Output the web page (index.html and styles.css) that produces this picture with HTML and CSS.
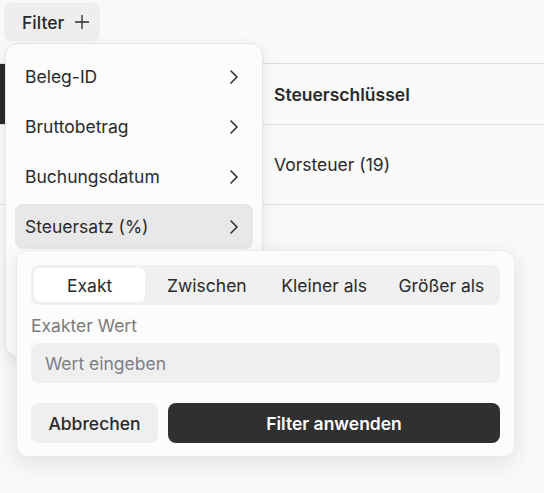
FILE: index.html
```html
<!DOCTYPE html>
<html lang="de">
<head>
<meta charset="utf-8">
<title>Buchungen</title>
<link rel="stylesheet" href="styles.css">
</head>
<body>
<div class="page">
  <div class="toolbar">
    <button class="filter-btn" type="button">
      <span>Filter</span>
      <svg class="plus" viewBox="0 0 16 16" width="16" height="16" aria-hidden="true">
        <path d="M8 1.5v13M1.5 8h13" fill="none" stroke="currentColor" stroke-width="1.3" stroke-linecap="round"/>
      </svg>
    </button>
  </div>

  <div class="table">
    <div class="cell head dark"></div>
    <div class="cell head">Steuerschlüssel</div>
    <div class="cell"></div>
    <div class="cell">Vorsteuer (19)</div>
  </div>

  <div class="menu">
    <div class="menu-item"><span>Beleg-ID</span><svg class="chev" viewBox="0 0 24 24"><path d="m9 18 6-6-6-6"/></svg></div>
    <div class="menu-item"><span>Bruttobetrag</span><svg class="chev" viewBox="0 0 24 24"><path d="m9 18 6-6-6-6"/></svg></div>
    <div class="menu-item"><span>Buchungsdatum</span><svg class="chev" viewBox="0 0 24 24"><path d="m9 18 6-6-6-6"/></svg></div>
    <div class="menu-item active"><span>Steuersatz (%)</span><svg class="chev" viewBox="0 0 24 24"><path d="m9 18 6-6-6-6"/></svg></div>
  </div>

  <div class="popover">
    <div class="segments">
      <div class="seg on">Exakt</div>
      <div class="seg">Zwischen</div>
      <div class="seg">Kleiner als</div>
      <div class="seg">Größer als</div>
    </div>
    <label class="field-label" for="wert">Exakter Wert</label>
    <input class="field" id="wert" type="text" placeholder="Wert eingeben">
    <div class="actions">
      <button class="btn secondary" type="button">Abbrechen</button>
      <button class="btn primary" type="button">Filter anwenden</button>
    </div>
  </div>
</div>
</body>
</html>
```

FILE: styles.css
```css
* { box-sizing: border-box; }

html, body {
  margin: 0;
  background: #f8f9fa;
  font-family: Inter, "Noto Sans", sans-serif;
  font-size: 17.5px;
  color: #2a2a2a;
}

.page {
  position: relative;
  width: 544px;
  height: 493px;
  overflow: hidden;
}

.toolbar {
  padding: 3px 4px 0;
  height: 63px;
}

.filter-btn {
  display: flex;
  align-items: center;
  gap: 10px;
  height: 38px;
  width: 96px;
  padding: 0 0 0 18px;
  border: 0;
  border-radius: 8px;
  background: #eeeeee;
  font: 500 17.5px Inter, sans-serif;
  color: #2a2a2a;
}

.plus { color: #2a2a2a; }

/* data table */
.table {
  display: grid;
  grid-template-columns: 262px 1fr;
  border-top: 1px solid #dcdcdc;
}

.cell {
  display: flex;
  align-items: center;
  padding: 0 12px;
  border-bottom: 1px solid #dcdcdc;
  height: 80px;
  background: #fafafa;
}

.cell.head {
  height: 61px;
  font-weight: 600;
}

.cell.dark {
  background: #2b2b2b;
}

/* column menu */
.menu {
  position: absolute;
  left: 5px;
  top: 43px;
  width: 258px;
  height: 314px;
  padding: 10px 9px;
  display: flex;
  flex-direction: column;
  gap: 5px;
  background: #fcfcfc;
  border: 1px solid #e4e4e4;
  border-radius: 12px;
  box-shadow: 0 4px 16px rgba(0, 0, 0, 0.08);
}

.menu-item {
  flex: 0 0 45px;
  display: flex;
  align-items: center;
  justify-content: space-between;
  padding: 0 7px 0 10px;
  border-radius: 8px;
}

.menu-item.active { background: #e8e8e8; }

.chev {
  width: 24px;
  height: 24px;
  fill: none;
  stroke: #2a2a2a;
  stroke-width: 1.5;
  stroke-linecap: round;
  stroke-linejoin: round;
}

/* value filter popover */
.popover {
  position: absolute;
  left: 16px;
  top: 250px;
  width: 499px;
  height: 207px;
  padding: 14px;
  background: #fcfcfc;
  border: 1px solid #ececec;
  border-radius: 12px;
  box-shadow: 0 6px 22px rgba(0, 0, 0, 0.10);
}

.segments {
  display: grid;
  grid-template-columns: repeat(4, 1fr);
  height: 40px;
  background: #f0f0f0;
  border-radius: 8px;
}

.seg {
  margin: 3px;
  display: flex;
  align-items: center;
  justify-content: center;
  border-radius: 6px;
  color: #2a2a2a;
}

.seg.on { background: #ffffff; }

.field-label {
  display: block;
  margin-top: 9px;
  line-height: 24px;
  color: #7c7a78;
}

.field {
  display: block;
  width: 100%;
  height: 40px;
  margin-top: 5px;
  padding: 0 14px;
  border: 0;
  border-radius: 8px;
  background: #efefef;
  font: 17.5px Inter, sans-serif;
  color: #2a2a2a;
}

.field::placeholder { color: #7d8088; }

.actions {
  display: flex;
  gap: 10px;
  margin-top: 20px;
}

.btn {
  height: 40px;
  border: 0;
  border-radius: 8px;
  font: 500 17.5px Inter, sans-serif;
}

.btn.secondary {
  width: 127px;
  background: #efefef;
  color: #2a2a2a;
}

.btn.primary {
  flex: 1;
  background: #303030;
  color: #fff;
  font-weight: 600;
}
```
